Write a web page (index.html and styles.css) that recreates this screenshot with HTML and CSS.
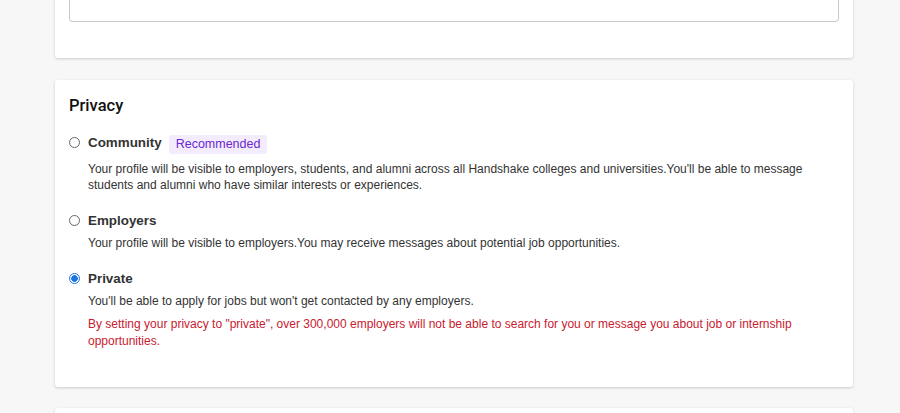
FILE: index.html
```html
<!DOCTYPE html>
<html>
<head>
<meta charset="utf-8">
<link rel="stylesheet" href="styles.css">
</head>
<body>
<div class="page">
  <section class="card card-top">
    <div class="textbox"></div>
  </section>
  <section class="card privacy">
    <h2 class="title">Privacy</h2>
    <div class="option">
      <span class="radio"></span>
      <div class="option-body">
        <div class="label-row"><span class="label">Community</span><span class="badge">Recommended</span></div>
        <p class="desc">Your profile will be visible to employers, students, and alumni across all Handshake colleges and universities.You'll be able to message students and alumni who have similar interests or experiences.</p>
      </div>
    </div>
    <div class="option">
      <span class="radio"></span>
      <div class="option-body">
        <div class="label-row"><span class="label">Employers</span></div>
        <p class="desc">Your profile will be visible to employers.You may receive messages about potential job opportunities.</p>
      </div>
    </div>
    <div class="option">
      <span class="radio checked"></span>
      <div class="option-body">
        <div class="label-row"><span class="label">Private</span></div>
        <p class="desc">You'll be able to apply for jobs but won't get contacted by any employers.</p>
        <p class="warn">By setting your privacy to "private", over 300,000 employers will not be able to search for you or message you about job or internship opportunities.</p>
      </div>
    </div>
  </section>
  <section class="card card-bottom"></section>
</div>
</body>
</html>
```
FILE: styles.css
```css
html, body {
  margin: 0;
  padding: 0;
  background: #f7f7f7;
  font-family: "Liberation Sans", Arial, sans-serif;
  color: #333;
  overflow: hidden;
}
.page {
  width: 798px;
  margin-left: 55px;
  display: flex;
  flex-direction: column;
  gap: 22px;
  margin-top: -39px;
}
.card {
  background: #fff;
  border-radius: 3px;
  box-shadow: 0 1px 3px rgba(0,0,0,0.18);
}
.card-top {
  padding: 0 14px 36px 14px;
}
.textbox {
  height: 60px;
  border: 1px solid #c9c9c9;
  border-top: none;
  border-radius: 0 0 4px 4px;
}
.privacy {
  padding: 16px 14px 37px 14px;
}
.title {
  margin: 0 0 18px 0;
  font-family: Roboto, "Liberation Sans", Arial, sans-serif;
  font-size: 16.5px;
  font-weight: 500;
  color: #111;
  line-height: 20px;
}
.option {
  display: flex;
  gap: 8px;
  margin-bottom: 19px;
}
.option:last-child { margin-bottom: 0; }
.radio {
  flex: none;
  width: 9px;
  height: 9px;
  border: 1px solid #666;
  border-radius: 50%;
  margin-top: 3px;
  box-sizing: content-box;
  background: #fff;
}
.radio.checked {
  border-color: #1a73e8;
  background: radial-gradient(circle, #1a73e8 0 3px, #fff 3.6px);
}
.label-row {
  display: flex;
  align-items: flex-start;
  gap: 7px;
}
.label {
  font-size: 13.4px;
  font-weight: 700;
  color: #333;
  line-height: 18px;
}
.badge {
  margin: 1px 0 2px 0;
  font-size: 12.5px;
  color: #6c28d0;
  background: #f3ecfd;
  padding: 2px 7px;
  border-radius: 3px;
  line-height: 15px;
}
.desc {
  margin: 5px 0 0 0;
  font-size: 12px;
  line-height: 16px;
  color: #333;
}
.warn {
  margin: 7px 0 0 0;
  font-size: 12px;
  line-height: 17px;
  color: #c8202f;
}
.card-bottom {
  margin-top: -1px;
  height: 60px;
}
```
